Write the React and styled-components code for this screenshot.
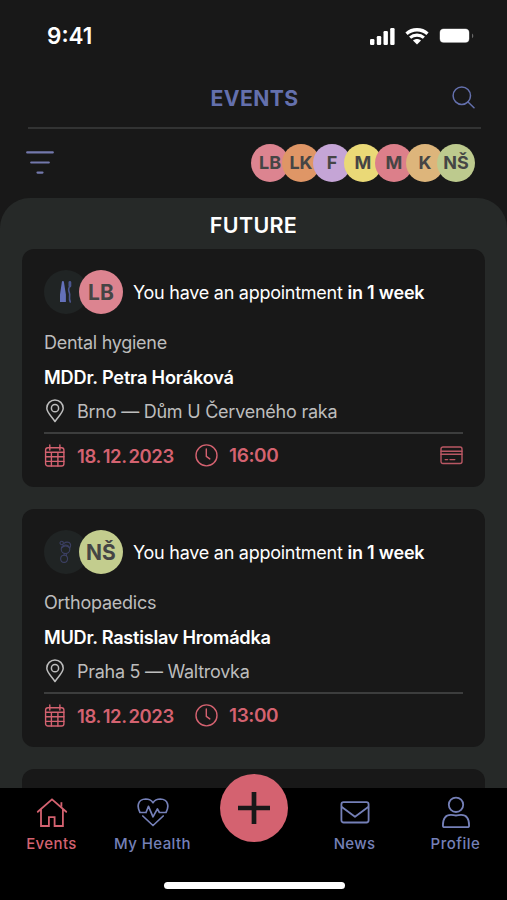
import React from 'react';
import styled, { createGlobalStyle } from 'styled-components';

const color = {
  bg: '#181818',
  sheet: '#262928',
  rose: '#d46270',
  indigo: '#6470ad',
  nav: '#7580b8',
  muted: '#bdbdbd',
  rule: '#3c3d3d',
};

const GlobalStyle = createGlobalStyle`
  * { box-sizing: border-box; }
  body { margin: 0; background: ${color.bg}; }
`;

const Screen = styled.main`
  width: 507px;
  height: 900px;
  display: flex;
  flex-direction: column;
  overflow: hidden;
  background: ${color.bg};
  color: #fff;
  font-family: Inter, 'Liberation Sans', sans-serif;
`;

const StatusBar = styled.div`
  height: 72px;
  flex: none;
  display: flex;
  align-items: center;
  justify-content: space-between;
  padding: 0 33px 0 47px;
`;

const Clock = styled.span`
  font-size: 22.5px;
  font-weight: 600;
  letter-spacing: 0;
  line-height: 28px;
`;

const StatusIcons = styled.div`
  display: flex;
  align-items: center;
  gap: 10px;
`;

const Header = styled.header`
  height: 57px;
  flex: none;
  margin: 0 26px 0 28px;
  display: grid;
  grid-template-columns: 1fr auto 1fr;
  align-items: center;
  padding-bottom: 4px;
  border-bottom: 2px solid #323333;
`;

const Title = styled.h1`
  grid-column: 2;
  margin: 1px 0 0;
  color: ${color.indigo};
  font-size: 21.2px;
  font-weight: 700;
  letter-spacing: 0.4px;
  line-height: 28px;
`;

const SearchButton = styled.div`
  grid-column: 3;
  justify-self: end;
  display: flex;
  margin-right: 6px;
  color: ${color.indigo};
`;

const FilterRow = styled.div`
  height: 69px;
  flex: none;
  display: flex;
  align-items: center;
  justify-content: space-between;
  padding: 0 32px 2px 26px;
`;

const People = styled.div`
  display: flex;
`;

const Avatar = styled.div`
  width: ${(p) => p.$size}px;
  height: ${(p) => p.$size}px;
  flex: none;
  display: flex;
  align-items: center;
  justify-content: center;
  margin-left: -${(p) => p.$overlap || 0}px;
  border-radius: 50%;
  background: ${(p) => p.$tone};
  color: #454545;
  font-size: ${(p) => p.$font}px;
  font-weight: 700;
`;

const Sheet = styled.section`
  height: 590px;
  flex: none;
  overflow: hidden;
  display: flex;
  flex-direction: column;
  gap: 22px;
  padding: 0 22px;
  border-radius: 30px 30px 0 0;
  background: ${color.sheet};
`;

const SheetTitle = styled.h2`
  margin: 0 0 -22px;
  height: 51px;
  flex: none;
  padding-top: 13px;
  text-align: center;
  font-size: 21.5px;
  font-weight: 600;
  line-height: 28px;
  letter-spacing: 0.3px;
`;

const Card = styled.article`
  height: 238px;
  flex: none;
  padding: 21px 22px 0;
  border-radius: 12px;
  background: ${color.bg};
`;

const CardHead = styled.div`
  height: 44px;
  display: flex;
  align-items: center;
`;

const Notice = styled.p`
  margin: 2px 0 0 10px;
  font-size: 18px;
  line-height: 26px;
  letter-spacing: -0.26px;
  white-space: nowrap;
`;

const Strong = styled.strong`
  font-weight: 600;
  letter-spacing: -0.2px;
`;

const Specialty = styled.p`
  margin: 16px 0 0;
  color: ${color.muted};
  font-size: 18px;
  line-height: 26px;
  letter-spacing: ${(p) => p.$track};
`;

const Doctor = styled.h3`
  margin: 8px 0 0;
  font-size: 18.2px;
  font-weight: 600;
  line-height: 26px;
  letter-spacing: ${(p) => p.$track};
`;

const Place = styled.div`
  height: 34px;
  margin-top: 4px;
  display: flex;
  align-items: center;
  gap: 11px;
  color: ${color.muted};
  font-size: 18px;
  letter-spacing: ${(p) => p.$track};
  white-space: nowrap;
`;

const When = styled.div`
  height: 45px;
  margin-top: 4px;
  display: flex;
  align-items: center;
  border-top: 2px solid ${color.rule};
  color: ${color.rose};
`;

const WhenText = styled.span`
  width: ${(p) => p.$width}px;
  flex: none;
  margin-left: 11px;
  font-size: ${(p) => p.$size}px;
  font-weight: 600;
  letter-spacing: ${(p) => p.$track};
  word-spacing: -2.2px;
  white-space: nowrap;
`;

const CardMark = styled.div`
  margin-left: auto;
  display: flex;
`;

const TabBar = styled.nav`
  position: relative;
  height: 112px;
  flex: none;
  display: grid;
  grid-template-columns: repeat(5, 101px);
  justify-content: center;
  background: #000;
`;

const Tab = styled.div`
  display: flex;
  flex-direction: column;
  align-items: center;
  padding-top: 7px;
  color: ${(p) => (p.$active ? color.rose : color.nav)};
`;

const TabLabel = styled.span`
  margin-top: 5px;
  font-size: 15px;
  font-weight: 500;
  line-height: 20px;
  letter-spacing: ${(p) => p.$track};
  white-space: nowrap;
`;

const AddButton = styled.div`
  justify-self: center;
  width: 68px;
  height: 68px;
  margin-top: -14px;
  display: flex;
  align-items: center;
  justify-content: center;
  border-radius: 50%;
  background: ${color.rose};
  z-index: 1;
`;

const HomeIndicator = styled.div`
  position: absolute;
  left: 164px;
  bottom: 11px;
  width: 181px;
  height: 7px;
  border-radius: 4px;
  background: #fff;
`;

const Svg = ({ w, h, sw = 1.6, children }) => (
  <svg width={w} height={h} viewBox={`0 0 ${w} ${h}`} fill="none" stroke="currentColor"
    strokeWidth={sw} strokeLinecap="round" strokeLinejoin="round">
    {children}
  </svg>
);

const Signal = () => (
  <svg width="25" height="17" viewBox="0 0 25 17" fill="#fff">
    <rect x="0" y="11" width="4.4" height="6" rx="1.2" />
    <rect x="6.8" y="8" width="4.4" height="9" rx="1.2" />
    <rect x="13.5" y="3" width="4.4" height="14" rx="1.2" />
    <rect x="20.2" y="0" width="4.4" height="17" rx="1.2" />
  </svg>
);

const Wifi = () => (
  <svg width="24" height="17" viewBox="0 0 24 17" fill="none" stroke="#fff">
    <path d="M1.5 5.8C7.4 .4 16.6 .4 22.5 5.8" strokeWidth="3.3" />
    <path d="M5.1 9.7C9 6.3 15 6.3 18.9 9.7" strokeWidth="3.1" />
    <path d="M8 12.6C10.2 10.6 13.8 10.6 16 12.6L12 16.6Z" fill="#fff" stroke="none" />
  </svg>
);

const Battery = () => (
  <svg width="35" height="16" viewBox="0 0 35 16">
    <rect x=".5" y=".5" width="30" height="14.5" rx="4.2" fill="#777" />
    <rect x="1" y="1" width="29" height="13.3" rx="3.6" fill="#fff" />
    <path d="M33 5.4c1.8.8 1.8 4 0 4.8Z" fill="#666" />
  </svg>
);

const SearchIcon = () => (
  <Svg w={23} h={23} sw={1.5}>
    <circle cx="9.8" cy="9.7" r="8.7" />
    <path d="M16 16l6 5.7" />
  </Svg>
);

const FilterIcon = () => (
  <Svg w={28} h={24} sw={2.2}>
    <g stroke="#7378ac">
      <path d="M1.2 1.4h25.6M5.2 11.5h17.6M11.5 21.6h5" />
    </g>
  </Svg>
);

const PinIcon = () => (
  <Svg w={22} h={24} sw={1.5}>
    <path d="M11 22.5C8.3 18.2 2.8 13.4 2.8 9.2a8.2 8.2 0 0 1 16.4 0c0 4.2-5.5 9-8.2 13.3Z" />
    <circle cx="11" cy="9.2" r="3.6" />
  </Svg>
);

const CalendarIcon = () => (
  <Svg w={22} h={24} sw={1.4}>
    <rect x="1.6" y="3.8" width="18.3" height="18.2" rx="2.3" />
    <path d="M1.6 8.3h18.3M1.6 12.8h18.3M1.6 17.4h18.3M7.4 8.3V22M13.9 8.3V22M5.8 1v5.1M15.9 1v5.1" />
  </Svg>
);

const ClockIcon = () => (
  <Svg w={23} h={23} sw={1.4}>
    <circle cx="11.5" cy="11.4" r="10.5" />
    <path d="M11.3 5v7.4l3.5 2.5" />
  </Svg>
);

const PaymentIcon = () => (
  <Svg w={23} h={19} sw={1.4}>
    <rect x="1" y="1" width="21" height="16.5" rx="2" stroke="#b95763" />
    <path d="M1 5.2h21M1 8.3h21M5.2 13.6h2.4M10 13.6h4.8" stroke="#b95763" />
  </Svg>
);

const DentalIcon = () => (
  <svg width="14" height="24" viewBox="0 0 14 24">
    <path d="M2.8 2.4c0-2 2.2-2 2.2 0l1.9 12v7.700H1v-7.700Z" fill="#6471ba" />
    <path d="M11.300 6c-2.500 2-2 4.200-.9 7s-1.100 5.600.9 9" fill="none" stroke="#4b5690" strokeWidth="1.600" strokeLinecap="round" />
    <path d="M10.900 2.500v3.500" stroke="#4b5690" strokeWidth="2.800" strokeLinecap="round" />
  </svg>
);

const OrthopaedicsIcon = () => (
  <Svg w={14} h={24} sw={1.1}>
    <g stroke="#3c4064">
      <circle cx="2.700" cy="3" r="1.700" />
      <path d="M5 3.300c2.300-2 7-1.600 6.600 2.600l-.8 2.200C8 5.200 5.200 5.200 2.500 8" />
      <circle cx="6.500" cy="9.300" r="4.300" />
      <path d="M5.200 13.600l-.2 1.700M7.200 13.600l.3 2" />
      <path d="M5.100 15.200c4.500 0 4.700 7.200 0 7.200s-4.500-7.200 0-7.200Z" />
    </g>
  </Svg>
);

const HomeIcon = () => (
  <Svg w={32} h={34} sw={1.8}>
    <path d="M1.8 16.8L16 4.4l14.2 12.4M5 14.5V31h7.9v-8.800h5.700V31h8.300V14.500" strokeLinejoin="miter" />
    <path d="M25.400 7.200v4.600" strokeLinecap="butt" />
  </Svg>
);

const HeartIcon = () => (
  <Svg w={32} h={34} sw={1.7}>
    <path d="M9 17.500H3C-.2 11.900.4 4.200 8.700 4c3.200 0 5.600 1.200 7.300 3.700C17.700 5.200 20.100 4 23.300 4c8.300.2 8.900 7.900 5.700 13.500h-6.600l-2-3.600-4.400 8-4.500-10.600L9 17.500M5.800 21L16 30.500 26.200 21" />
  </Svg>
);

const MailIcon = () => (
  <Svg w={32} h={34} sw={1.8}>
    <rect x="2.400" y="7.200" width="27.200" height="20.300" rx="2.200" />
    <path d="M2.800 12L16 21.800 29.200 12" />
  </Svg>
);

const ProfileIcon = () => (
  <Svg w={32} h={34} sw={1.8}>
    <circle cx="16" cy="9.800" r="7.200" />
    <path d="M4.700 32.200a1.800 1.800 0 0 1-1.800-1.800c0-6.400 2.600-10.600 8-10.600 2 0 3.200.7 5.100.7s3.100-.7 5.100-.7c5.400 0 8 4.200 8 10.600a1.800 1.800 0 0 1-1.800 1.800Z" />
  </Svg>
);

const PlusIcon = () => (
  <svg width="34" height="34" viewBox="0 0 34 34" stroke="#181818" strokeWidth="4.7">
    <path d="M17 1v32M1 17h32" />
  </svg>
);

const people = [
  ['LB', '#dc8490'],
  ['LK', '#df9666'],
  ['F', '#c5a5d6'],
  ['M', '#ead977'],
  ['M', '#dc7f8a'],
  ['K', '#ddb57b'],
  ['NŠ', '#bdca8e'],
];

const events = [
  {
    icon: <DentalIcon />, who: 'LB', tone: '#dc8490',
    specialty: 'Dental hygiene', specialtyTrack: '-0.28px',
    doctor: 'MDDr. Petra Horáková', doctorTrack: '-0.2px',
    place: 'Brno — Dům U Červeného raka', placeTrack: '-0.24px',
    time: '16:00', payment: true,
  },
  {
    icon: <OrthopaedicsIcon />, who: 'NŠ', tone: '#c3cd8e',
    specialty: 'Orthopaedics', specialtyTrack: '-0.24px',
    doctor: 'MUDr. Rastislav Hromádka', doctorTrack: '-0.28px',
    place: 'Praha 5 — Waltrovka', placeTrack: '-0.28px',
    time: '13:00',
  },
];

const EventCard = ({ event }) => (
  <Card>
    <CardHead>
      <Avatar $size={44} $tone="#202424">{event.icon}</Avatar>
      <Avatar $size={44} $tone={event.tone} $font={21} $overlap={9}>{event.who}</Avatar>
      <Notice>You have an appointment <Strong>in 1 week</Strong></Notice>
    </CardHead>
    <Specialty $track={event.specialtyTrack}>{event.specialty}</Specialty>
    <Doctor $track={event.doctorTrack}>{event.doctor}</Doctor>
    <Place $track={event.placeTrack}><PinIcon />{event.place}</Place>
    <When>
      <CalendarIcon />
      <WhenText $width={118} $size={18.5} $track="-0.4px">18. 12. 2023</WhenText>
      <ClockIcon />
      <WhenText $width={60} $size={19} $track="-0.4px">{event.time}</WhenText>
      {event.payment && <CardMark><PaymentIcon /></CardMark>}
    </When>
  </Card>
);

export default function App() {
  return (
    <Screen>
      <GlobalStyle />
      <StatusBar>
        <Clock>9:41</Clock>
        <StatusIcons><Signal /><Wifi /><Battery /></StatusIcons>
      </StatusBar>
      <Header>
        <Title>EVENTS</Title>
        <SearchButton><SearchIcon /></SearchButton>
      </Header>
      <FilterRow>
        <FilterIcon />
        <People>
          {people.map(([name, tone], i) => (
            <Avatar key={i} $size={38} $tone={tone} $font={18} $overlap={i ? 7 : 0}>{name}</Avatar>
          ))}
        </People>
      </FilterRow>
      <Sheet>
        <SheetTitle>FUTURE</SheetTitle>
        {events.map((event) => <EventCard key={event.specialty} event={event} />)}
        <Card />
      </Sheet>
      <TabBar>
        <Tab $active><HomeIcon /><TabLabel $track="0.4px">Events</TabLabel></Tab>
        <Tab><HeartIcon /><TabLabel $track="0.4px">My Health</TabLabel></Tab>
        <AddButton><PlusIcon /></AddButton>
        <Tab><MailIcon /><TabLabel $track="0.3px">News</TabLabel></Tab>
        <Tab><ProfileIcon /><TabLabel $track="0.5px">Profile</TabLabel></Tab>
        <HomeIndicator />
      </TabBar>
    </Screen>
  );
}
